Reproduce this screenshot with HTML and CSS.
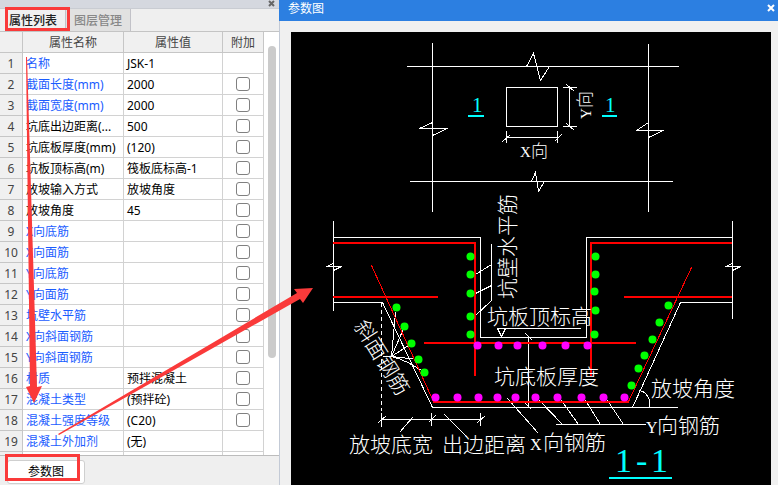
FILE: index.html
```html
<!DOCTYPE html>
<html lang="zh-CN">
<head>
<meta charset="utf-8">
<title>参数图</title>
<link rel="stylesheet" href="styles.css">
</head>
<body>
<div class="workspace">
  <section class="panel">
    <header class="panel-bar">
      <button class="panel-close" type="button" aria-label="关闭"><svg width="7" height="7" viewBox="0 0 7 7"><path d="M1 1L6 6M6 1L1 6"/></svg></button>
    </header>
    <nav class="tabs">
      <button class="tab tab-active" type="button">属性列表</button>
      <button class="tab" type="button">图层管理</button>
    </nav>
    <div class="sheet">
      <table class="props">
        <colgroup><col class="col-no"><col class="col-name"><col class="col-value"><col class="col-extra"></colgroup>
        <thead>
          <tr><th></th><th>属性名称</th><th>属性值</th><th>附加</th></tr>
        </thead>
        <tbody>
          <tr><th>1</th><td class="key">名称</td><td>JSK-1</td><td></td></tr>
          <tr><th>2</th><td class="key">截面长度(mm)</td><td>2000</td><td class="check"><input type="checkbox" aria-label="截面长度 附加"></td></tr>
          <tr><th>3</th><td class="key">截面宽度(mm)</td><td>2000</td><td class="check"><input type="checkbox" aria-label="截面宽度 附加"></td></tr>
          <tr><th>4</th><td>坑底出边距离(...</td><td>500</td><td class="check"><input type="checkbox" aria-label="坑底出边距离 附加"></td></tr>
          <tr><th>5</th><td>坑底板厚度(mm)</td><td>(120)</td><td class="check"><input type="checkbox" aria-label="坑底板厚度 附加"></td></tr>
          <tr><th>6</th><td>坑板顶标高(m)</td><td>筏板底标高-1</td><td class="check"><input type="checkbox" aria-label="坑板顶标高 附加"></td></tr>
          <tr><th>7</th><td>放坡输入方式</td><td>放坡角度</td><td class="check"><input type="checkbox" aria-label="放坡输入方式 附加"></td></tr>
          <tr><th>8</th><td>放坡角度</td><td>45</td><td class="check"><input type="checkbox" aria-label="放坡角度 附加"></td></tr>
          <tr><th>9</th><td class="key">X向底筋</td><td></td><td class="check"><input type="checkbox" aria-label="X向底筋 附加"></td></tr>
          <tr><th>10</th><td class="key">X向面筋</td><td></td><td class="check"><input type="checkbox" aria-label="X向面筋 附加"></td></tr>
          <tr><th>11</th><td class="key">Y向底筋</td><td></td><td class="check"><input type="checkbox" aria-label="Y向底筋 附加"></td></tr>
          <tr><th>12</th><td class="key">Y向面筋</td><td></td><td class="check"><input type="checkbox" aria-label="Y向面筋 附加"></td></tr>
          <tr><th>13</th><td class="key">坑壁水平筋</td><td></td><td class="check"><input type="checkbox" aria-label="坑壁水平筋 附加"></td></tr>
          <tr><th>14</th><td class="key">X向斜面钢筋</td><td></td><td class="check"><input type="checkbox" aria-label="X向斜面钢筋 附加"></td></tr>
          <tr><th>15</th><td class="key">Y向斜面钢筋</td><td></td><td class="check"><input type="checkbox" aria-label="Y向斜面钢筋 附加"></td></tr>
          <tr><th>16</th><td class="key">材质</td><td>预拌混凝土</td><td class="check"><input type="checkbox" aria-label="材质 附加"></td></tr>
          <tr><th>17</th><td class="key">混凝土类型</td><td>(预拌砼)</td><td class="check"><input type="checkbox" aria-label="混凝土类型 附加"></td></tr>
          <tr><th>18</th><td class="key">混凝土强度等级</td><td>(C20)</td><td class="check"><input type="checkbox" aria-label="混凝土强度等级 附加"></td></tr>
          <tr><th>19</th><td class="key">混凝土外加剂</td><td>(无)</td><td></td></tr>
          <tr><th></th><td></td><td></td><td></td></tr>
        </tbody>
      </table>
      <div class="scroll-track"><div class="scroll-thumb"></div></div>
    </div>
    <footer class="panel-foot">
      <button class="param-button" type="button">参数图</button>
    </footer>
  </section>

  <section class="dialog">
    <header class="dialog-bar">
      <h1 class="dialog-title">参数图</h1>
      <button class="dialog-close" type="button" aria-label="关闭"><svg width="8" height="8" viewBox="0 0 8 8"><path d="M1 1L7 7M7 1L1 7"/></svg></button>
    </header>
    <div class="canvas">
      <svg class="drawing" viewBox="291 32 480 453" preserveAspectRatio="xMinYMin meet">
        <g transform="translate(.5 .5)">
          <!-- plan view -->
          <g class="line">
            <path d="M432 42V211M648 43V211M406 66H678M409 181H672"/>
            <path d="M526 66L533 53L540 80L549 66M531 181L535 172L538 191L544 181"/>
            <path d="M432 122L419 128H447L432 135M648 122L636 130H663L648 137"/>
            <path d="M506 87H557V126H506ZM506 130V142M557 130V142M506 137H557M502 141L510 134M554 141L561 134"/>
            <path d="M569 87V126M562 87H576M562 126H576M566 84L574 91M566 123L574 130"/>
          </g>
          <!-- slab and pit outline -->
          <g class="line">
            <path d="M333 220V310M732 220V318M333 237H480V337H586V237H732"/>
            <path d="M333 263L326 266H341L333 270M732 263L725 266H740L732 270"/>
            <path d="M333 302H382L432 407H677M632 407L680 302H732"/>
            <path d="M381 412V426M431 412V425M480 412V425M381 419H480M378 422L386 415M428 422L435 415M477 422L485 415"/>
            <path d="M399 432L412 417M444 414L467 437"/>
            <path class="dash" d="M381 302V410"/>
            <path d="M491 243V300L474 316M475 274L491 264M475 293L491 285"/>
            <path d="M496 328H580M497 328L501 336L505 328M528 337V407M525 333L532 340M525 403L531 409"/>
            <path d="M507 398L538 433M555 424H645M539 400L562 424M561 400L578 424M585 400L600 424M607 400L623 424"/>
            <path d="M639 390C645 391 651 398 649 407"/>
            <path d="M382 356H391L395 312M391 356L404 326M391 356L411 343M391 356L418 359M391 356Q407 360 424 372"/>
          </g>
          <!-- reinforcement -->
          <path class="bar-thin" d="M371 265L433 401M691 267L628 401"/>
        </g>
        <path class="bar" d="M333 243H475V376M732 243H591V376M333 297H438M624 297H732M424 343H636M433 402H629"/>
        <g class="dot-green">
          <circle cx="470.500" cy="256.500" r="4"/><circle cx="470.500" cy="274.500" r="4"/><circle cx="470.500" cy="293.500" r="4"/><circle cx="470.500" cy="316.500" r="4"/><circle cx="470.500" cy="334.500" r="4"/>
          <circle cx="595.500" cy="256.500" r="4"/><circle cx="595.500" cy="274.500" r="4"/><circle cx="594.500" cy="291.500" r="4"/><circle cx="595.500" cy="310.500" r="4"/><circle cx="594.500" cy="334.500" r="4"/>
          <circle cx="396.500" cy="307.500" r="4"/><circle cx="404.500" cy="326.500" r="4"/><circle cx="411.500" cy="343.500" r="4"/><circle cx="418.500" cy="359.500" r="4"/><circle cx="424.500" cy="372.500" r="4"/>
          <circle cx="668.500" cy="305.500" r="4"/><circle cx="659.500" cy="322.500" r="4"/><circle cx="652.500" cy="339.500" r="4"/><circle cx="644.500" cy="355.500" r="4"/><circle cx="638.500" cy="368.500" r="4"/><circle cx="631.500" cy="385.500" r="4"/>
        </g>
        <g class="dot-pink">
          <circle cx="477.500" cy="345.500" r="4"/><circle cx="498.500" cy="345.500" r="4"/><circle cx="517.500" cy="345.500" r="4"/><circle cx="542.500" cy="345.500" r="4"/><circle cx="565.500" cy="345.500" r="4"/><circle cx="587.500" cy="345.500" r="4"/>
          <circle cx="435.500" cy="397.500" r="4"/><circle cx="457.500" cy="397.500" r="4"/><circle cx="478.500" cy="397.500" r="4"/><circle cx="497.500" cy="397.500" r="4"/><circle cx="515.500" cy="397.500" r="4"/><circle cx="535.500" cy="397.500" r="4"/><circle cx="557.500" cy="397.500" r="4"/><circle cx="581.500" cy="397.500" r="4"/><circle cx="603.500" cy="397.500" r="4"/><circle cx="624.500" cy="397.500" r="4"/>
        </g>
        <!-- section marks -->
        <path class="mark-line" d="M468 116H484M602 116H617M609 478H672"/>
        <g class="mark">
          <text x="472" y="112">1</text>
          <text x="605" y="112">1</text>
          <text class="mark-big" x="615 636 651" y="472">1-1</text>
        </g>
        <!-- labels -->
        <g class="label">
          <text class="label-small" x="520" y="157"><tspan class="axis-small">X</tspan><tspan x="531">向</tspan></text>
          <text class="label-small" transform="translate(591 119) rotate(-90)"><tspan class="axis-small">Y</tspan><tspan x="11">向</tspan></text>
          <text transform="translate(515 299) rotate(-90)">坑壁水平筋</text>
          <text transform="translate(366 331) rotate(58)" x="-11" y="8">斜面钢筋</text>
          <text x="487" y="324">坑板顶标高</text>
          <text x="494" y="384">坑底板厚度</text>
          <text x="651" y="396">放坡角度</text>
          <text x="349" y="452">放坡底宽</text>
          <text x="442" y="452">出边距离</text>
          <text x="530" y="450"><tspan class="axis">X</tspan><tspan x="543">向钢筋</tspan></text>
          <text x="646" y="433"><tspan class="axis">Y</tspan><tspan x="657">向钢筋</tspan></text>
        </g>
      </svg>
    </div>
  </section>

  <!-- callouts drawn over both windows -->
  <svg class="callouts" viewBox="0 0 778 485" preserveAspectRatio="xMinYMin meet" aria-hidden="true">
    <path class="callout-box" d="M6.500 8.500H68.500V29.500H6.500ZM6.500 455.500H78.500V479.500H6.500Z"/>
    <path class="callout-arrow" d="M26 57H27L37 387L42 386L34 403L26 387L30 386Z"/>
    <path class="callout-arrow" d="M58 434L297 293L294 289L313 288L303 303L300 299L59 435Z"/>
  </svg>
</div>
</body>
</html>
```
FILE: styles.css
```css
* { box-sizing: border-box; }

body {
  margin: 0;
  font: 12px/20px "Noto Sans", "Noto Sans CJK SC", sans-serif;
  color: #000;
  background: #f0f0f0;
}

button {
  font: inherit;
  margin: 0;
  padding: 0;
  border: 0;
  background: none;
}

.workspace {
  position: relative;
  display: flex;
  height: 100vh;
  overflow: hidden;
}

/* property panel */
.panel {
  flex: 0 0 279px;
  display: flex;
  flex-direction: column;
  min-height: 0;
  background: #efefef;
}

.panel-bar {
  flex: none;
  display: flex;
  justify-content: flex-end;
  height: 9px;
  padding-right: 4px;
  background: #d5d8df;
  border-bottom: 1px solid #c9ccd2;
}

.panel-close { display: flex; }
.panel-close svg { stroke: #666; stroke-width: 2; }

.tabs {
  flex: none;
  display: flex;
  height: 23px;
  padding-left: 1px;
  border-bottom: 1px solid #c4c4c4;
}

.tab {
  padding: 1px 8px 0;
  color: #888;
  font-weight: 500;
  background: #e1e1e1;
  border-right: 1px solid #c2c2c8;
}

.tab-active {
  color: #222;
  background: #f0f0f0;
}

.sheet {
  flex: 1;
  display: flex;
  min-height: 0;
  overflow: hidden;
  background: #fff;
}

.props {
  flex: 1;
  table-layout: fixed;
  border-spacing: 0;
  align-self: flex-start;
}

.col-no { width: 23px; }
.col-name { width: 101px; }
.col-value { width: 99px; }
.col-extra { width: 41px; }

.props th,
.props td {
  height: 21px;
  padding: 2px 0 0;
  line-height: 18px;
  border-right: 1px solid #d2d2d2;
  border-bottom: 1px solid #d2d2d2;
  white-space: nowrap;
  overflow: hidden;
}

.props th {
  color: #444;
  font-weight: 400;
  text-align: center;
  background: #f0f0f0;
  border-color: #c6c6c6;
}

.props td { padding-left: 3px; }
.props .key { color: #1a5cff; }

.props .check {
  padding: 0;
  text-align: center;
  line-height: 0;
}

.check input {
  appearance: none;
  width: 14px;
  height: 14px;
  margin: 0;
  border: 1px solid #808080;
  border-radius: 3px;
  background: #fff;
  vertical-align: middle;
}

.scroll-track {
  flex: 0 0 15px;
  padding: 14px 3px 0 4px;
}

.scroll-thumb {
  height: 312px;
  border-radius: 4px;
  background: #cbcbcb;
}

.panel-foot {
  flex: none;
  height: 30px;
  padding: 4px 7px;
  border-top: 1px solid #bcbcbc;
}

.param-button {
  width: 78px;
  height: 24px;
  background: #fff;
  border: 1px solid #cfcfcf;
  border-radius: 3px;
}

/* parameter drawing window */
.dialog {
  flex: 1;
  display: flex;
  flex-direction: column;
  min-width: 0;
}

.dialog-bar {
  flex: none;
  display: flex;
  align-items: flex-start;
  justify-content: space-between;
  height: 21px;
  padding: 0 3px 0 9px;
  color: #fff;
  background: #2c7fe1;
}

.dialog-title {
  margin: 0;
  font-size: 12px;
  font-weight: 400;
  line-height: 17px;
}

.dialog-close { padding-top: 4px; display: flex; }
.dialog-close svg { stroke: #fff; stroke-width: 2; }

.canvas {
  flex: 1;
  min-height: 0;
  padding: 11px 7px 0 11px;
  border-left: 1px solid #c3cad6;
}

.drawing {
  display: block;
  width: 100%;
  height: 100%;
  background: #000;
}

.line { fill: none; stroke: #fff; stroke-width: 1; shape-rendering: crispEdges; }
.dash { stroke-dasharray: 4 3; }
.bar-thin { fill: none; stroke: #f00; stroke-width: 1; shape-rendering: crispEdges; }
.bar { fill: none; stroke: #f00; stroke-width: 2; shape-rendering: crispEdges; }
.dot-green { fill: #0f0; }
.dot-pink { fill: #f0f; }
.mark-line { stroke: #0ff; stroke-width: 2; }
.mark { fill: #0ff; font: 21px "Liberation Serif", serif; }
.mark-big { font-size: 34px; }
.label { fill: #fff; font: 300 21px "Liberation Serif", "Noto Sans CJK SC", serif; }
.label-small { font-size: 17px; }
.axis { font-size: 16px; }
.axis-small { font-size: 15px; }

.callouts {
  position: absolute;
  top: 0;
  left: 0;
  width: 778px;
  height: 485px;
  pointer-events: none;
}

.callout-box { fill: none; stroke: #fa3a3a; stroke-width: 3; }
.callout-arrow { fill: #fa3a3a; }
```
